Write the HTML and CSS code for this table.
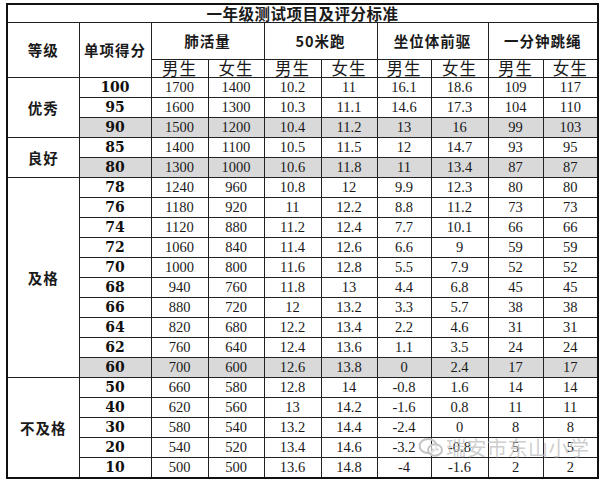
FILE: index.html
```html
<!DOCTYPE html>
<html lang="zh">
<head>
<meta charset="utf-8">
<link rel="stylesheet" href="styles.css">
</head>
<body>
<div class="page">
<table class="grid">
  <colgroup>
    <col class="w72"><col class="w72">
    <col class="w57"><col class="w56"><col class="w57"><col class="w56">
    <col class="w54"><col class="w57"><col class="w55"><col class="w55">
  </colgroup>
  <tr class="title"><td colspan="10">一年级测试项目及评分标准</td></tr>
  <tr class="h1">
    <td rowspan="2" class="hd">等级</td>
    <td rowspan="2" class="hd">单项得分</td>
    <td colspan="2" class="hd">肺活量</td>
    <td colspan="2" class="hd">50米跑</td>
    <td colspan="2" class="hd">坐位体前驱</td>
    <td colspan="2" class="hd">一分钟跳绳</td>
  </tr>
  <tr class="h2">
    <td>男生</td><td>女生</td><td>男生</td><td>女生</td><td>男生</td><td>女生</td><td>男生</td><td>女生</td>
  </tr>
  <tr><td rowspan="3" class="lvl">优秀</td><td class="sc">100</td><td>1700</td><td>1400</td><td>10.2</td><td>11</td><td>16.1</td><td>18.6</td><td>109</td><td>117</td></tr>
  <tr><td class="sc">95</td><td>1600</td><td>1300</td><td>10.3</td><td>11.1</td><td>14.6</td><td>17.3</td><td>104</td><td>110</td></tr>
  <tr class="sh"><td class="sc">90</td><td>1500</td><td>1200</td><td>10.4</td><td>11.2</td><td>13</td><td>16</td><td>99</td><td>103</td></tr>
  <tr><td rowspan="2" class="lvl">良好</td><td class="sc">85</td><td>1400</td><td>1100</td><td>10.5</td><td>11.5</td><td>12</td><td>14.7</td><td>93</td><td>95</td></tr>
  <tr class="sh"><td class="sc">80</td><td>1300</td><td>1000</td><td>10.6</td><td>11.8</td><td>11</td><td>13.4</td><td>87</td><td>87</td></tr>
  <tr><td rowspan="10" class="lvl">及格</td><td class="sc">78</td><td>1240</td><td>960</td><td>10.8</td><td>12</td><td>9.9</td><td>12.3</td><td>80</td><td>80</td></tr>
  <tr><td class="sc">76</td><td>1180</td><td>920</td><td>11</td><td>12.2</td><td>8.8</td><td>11.2</td><td>73</td><td>73</td></tr>
  <tr><td class="sc">74</td><td>1120</td><td>880</td><td>11.2</td><td>12.4</td><td>7.7</td><td>10.1</td><td>66</td><td>66</td></tr>
  <tr><td class="sc">72</td><td>1060</td><td>840</td><td>11.4</td><td>12.6</td><td>6.6</td><td>9</td><td>59</td><td>59</td></tr>
  <tr><td class="sc">70</td><td>1000</td><td>800</td><td>11.6</td><td>12.8</td><td>5.5</td><td>7.9</td><td>52</td><td>52</td></tr>
  <tr><td class="sc">68</td><td>940</td><td>760</td><td>11.8</td><td>13</td><td>4.4</td><td>6.8</td><td>45</td><td>45</td></tr>
  <tr><td class="sc">66</td><td>880</td><td>720</td><td>12</td><td>13.2</td><td>3.3</td><td>5.7</td><td>38</td><td>38</td></tr>
  <tr><td class="sc">64</td><td>820</td><td>680</td><td>12.2</td><td>13.4</td><td>2.2</td><td>4.6</td><td>31</td><td>31</td></tr>
  <tr><td class="sc">62</td><td>760</td><td>640</td><td>12.4</td><td>13.6</td><td>1.1</td><td>3.5</td><td>24</td><td>24</td></tr>
  <tr class="sh"><td class="sc">60</td><td>700</td><td>600</td><td>12.6</td><td>13.8</td><td>0</td><td>2.4</td><td>17</td><td>17</td></tr>
  <tr><td rowspan="5" class="lvl">不及格</td><td class="sc">50</td><td>660</td><td>580</td><td>12.8</td><td>14</td><td>-0.8</td><td>1.6</td><td>14</td><td>14</td></tr>
  <tr><td class="sc">40</td><td>620</td><td>560</td><td>13</td><td>14.2</td><td>-1.6</td><td>0.8</td><td>11</td><td>11</td></tr>
  <tr><td class="sc">30</td><td>580</td><td>540</td><td>13.2</td><td>14.4</td><td>-2.4</td><td>0</td><td>8</td><td>8</td></tr>
  <tr><td class="sc">20</td><td>540</td><td>520</td><td>13.4</td><td>14.6</td><td>-3.2</td><td>-0.8</td><td>5</td><td>5</td></tr>
  <tr><td class="sc">10</td><td>500</td><td>500</td><td>13.6</td><td>14.8</td><td>-4</td><td>-1.6</td><td>2</td><td>2</td></tr>
</table>
<div class="mark">
  <svg class="mark-logo" width="26" height="22" viewBox="0 0 26 22">
    <ellipse cx="10" cy="9" rx="8.5" ry="7" fill="none" stroke="#c4c4c4" stroke-width="2"/>
    <ellipse cx="17" cy="13" rx="7" ry="5.8" fill="rgba(255,255,255,0.6)" stroke="#c4c4c4" stroke-width="2"/>
    <circle cx="14.5" cy="12.5" r="1.1" fill="#c4c4c4"/>
    <circle cx="19.5" cy="12.5" r="1.1" fill="#c4c4c4"/>
  </svg>
  <span class="mark-text">瑞安市东山小学</span>
</div>
</div>
</body>
</html>
```
FILE: styles.css
```css
html, body {
  margin: 0;
  padding: 0;
  background: #fff;
}
.page {
  position: relative;
  width: 606px;
  height: 482px;
  padding: 3px 0 0 6px;
  box-sizing: border-box;
}
.grid {
  border-collapse: collapse;
  table-layout: fixed;
  width: 592px;
  border: 2px solid #111;
  font-family: "Liberation Serif", "Noto Sans CJK SC", serif;
  color: #1a1a1a;
}
.w72 { width: 72px; }
.w57 { width: 57px; }
.w56 { width: 56px; }
.w55 { width: 55px; }
.w54 { width: 54px; }
.grid td {
  border: 1px solid #222;
  padding: 0;
  height: 19px;
  line-height: 19px;
  text-align: center;
  font-size: 14.5px;
  white-space: nowrap;
}
.title td {
  height: 17px;
  line-height: 17px;
  font-family: "Noto Sans CJK SC", sans-serif;
  font-weight: bold;
  font-size: 15.5px;
  letter-spacing: 0.5px;
  text-align: center;
}
.h1 td {
  height: 36px;
  line-height: 36px;
}
.hd, .lvl {
  font-family: "Noto Sans CJK SC", sans-serif;
  font-weight: bold;
  font-size: 15.5px;
  letter-spacing: 1px;
}
.h2 td {
  height: 17px;
  line-height: 17px;
  font-family: "Noto Sans CJK SC", sans-serif;
  font-size: 16.5px;
  letter-spacing: 1px;
}
.grid td.sc {
  font-family: "DejaVu Serif", serif;
  font-weight: bold;
  font-size: 14px;
  color: #111;
}
.sh td {
  background: #d9d9d9;
}
.mark {
  position: absolute;
  left: 418px;
  top: 436px;
  display: flex;
  align-items: center;
  gap: 2px;
}
.mark-text {
  font-family: "Noto Sans CJK SC", sans-serif;
  font-size: 20px;
  line-height: 24px;
  color: rgba(190, 190, 190, 0.75);
  letter-spacing: 0.5px;
}
```
